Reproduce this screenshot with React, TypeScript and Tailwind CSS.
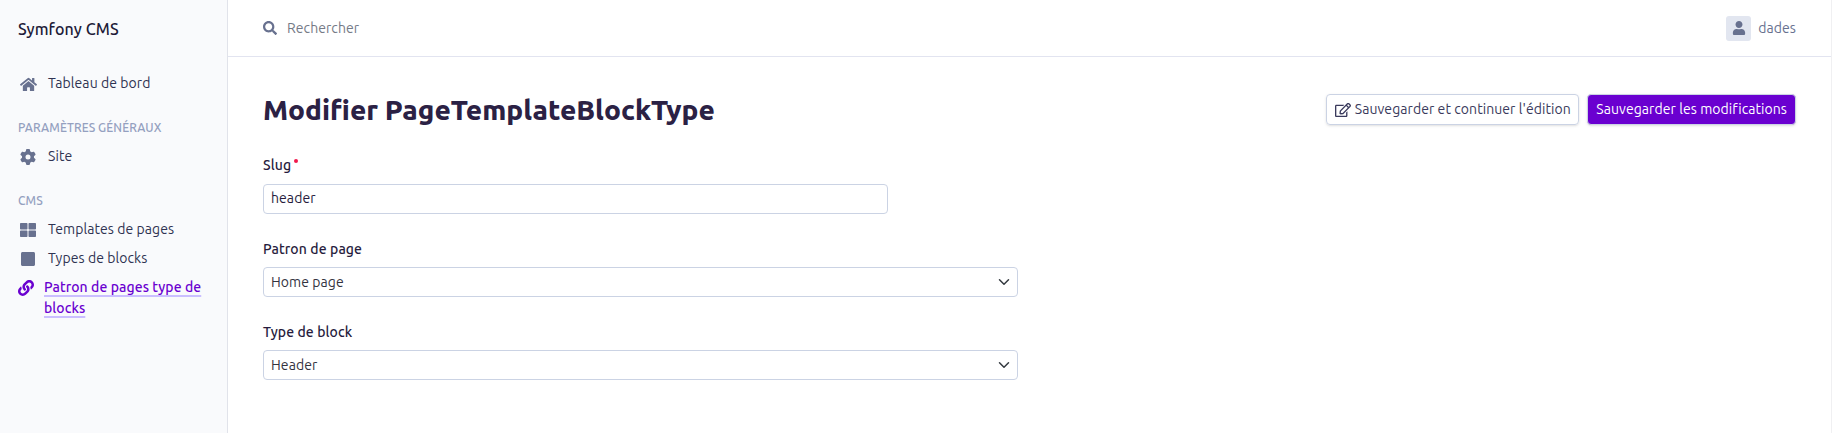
import type { ReactNode } from "react";
import {
  FaHome,
  FaLink,
  FaRegEdit,
  FaSearch,
  FaSquare,
  FaThLarge,
  FaUser,
} from "react-icons/fa";
import { FaGear } from "react-icons/fa6";

function MenuItem({ icon, children }: { icon: ReactNode; children: ReactNode }) {
  return (
    <a className="flex h-[29px] items-center text-[#2f3352]">
      <span className="mr-[10px] flex w-5 justify-center pt-px text-[#68718f]">{icon}</span>
      <span>{children}</span>
    </a>
  );
}

function MenuHeader({ children }: { children: ReactNode }) {
  return (
    <h2 className="h-[29px] text-[12px] leading-[29px] font-[540] tracking-[0.09px] text-[#94a0c0]">
      {children}
    </h2>
  );
}

function SelectField({ label, value }: { label: string; value: string }) {
  return (
    <div className="h-[83px]">
      <label className="block h-[37px] leading-[38px] font-[560] tracking-[0.1px] text-[#271c3d]">
        {label}
      </label>
      <div className="flex h-[30px] w-[755px] items-center justify-between rounded-[4px] border border-[#cbd3e4] px-[7px] text-[#34333f]">
        <span>{value}</span>
        <svg
          className="size-[12px]"
          viewBox="0 0 16 16"
          fill="none"
          stroke="#343a40"
          strokeWidth="2"
          strokeLinecap="round"
          strokeLinejoin="round"
        >
          <path d="m2 5 6 6 6-6" />
        </svg>
      </div>
    </div>
  );
}

export default function App() {
  return (
    <div className="flex h-[433px] w-full bg-white font-[Ubuntu,'Noto_Sans',sans-serif] text-[14px] leading-[21px] tracking-[0.07px]">
      <aside className="w-[228px] shrink-0 border-r border-[#e1e3ea] bg-[#f9fafc] pl-[18px]">
        <div className="pt-[17px] text-[16px] leading-6 font-[560] tracking-[0.1px] text-[#211a38]">
          Symfony CMS
        </div>
        <nav className="pt-[28px]">
          <MenuItem icon={<FaHome className="size-[17px]" />}>Tableau de bord</MenuItem>
          <div className="pt-[15px]">
            <MenuHeader>PARAMÈTRES GÉNÉRAUX</MenuHeader>
          </div>
          <MenuItem icon={<FaGear className="size-[16px]" />}>Site</MenuItem>
          <div className="pt-[15px]">
            <MenuHeader>CMS</MenuHeader>
          </div>
          <MenuItem icon={<FaThLarge className="size-[16px]" />}>Templates de pages</MenuItem>
          <MenuItem icon={<FaSquare className="size-[16px]" />}>Types de blocks</MenuItem>
          <a className="flex pt-1 font-[560] text-[#6a00d0]">
            <FaLink className="mt-[3px] mr-[10px] size-4 shrink-0" />
            <span className="w-[165px] underline decoration-[#cabfff] decoration-2 underline-offset-[3px]">
              Patron de pages type de blocks
            </span>
          </a>
        </nav>
      </aside>
      <main className="min-w-0 grow border-r border-[#f0f0f2]">
        <header className="flex h-[57px] items-center justify-between border-b border-[#e2e4f0] px-[35px]">
          <div className="flex items-center">
            <FaSearch className="size-[14px] text-[#68718f]" />
            <span className="ml-[10px] text-[#757a86]">Rechercher</span>
          </div>
          <div className="flex items-center text-[#68718f]">
            <span className="mr-[7px] flex size-[25px] items-center justify-center rounded-[3px] bg-[#e2e6f0]">
              <FaUser className="size-[14px]" />
            </span>
            <span>dades</span>
          </div>
        </header>
        <div className="flex items-start justify-between px-[35px]">
          <h1 className="pt-[35px] text-[28px] leading-[36px] font-extrabold tracking-normal text-[#2b2144]">
            Modifier PageTemplateBlockType
          </h1>
          <div className="flex gap-2 pt-[37px]">
            <button className="flex h-[31px] items-center gap-1 rounded-[4px] border border-[#cbd3e4] px-[7.5px] text-[#3a3a5c] shadow-sm">
              <FaRegEdit className="size-[16px]" />
              <span>Sauvegarder et continuer l'édition</span>
            </button>
            <button className="h-[31px] rounded-[4px] border border-[#cbd3e4] bg-[#6a00d0] px-2 text-white shadow-sm">
              Sauvegarder les modifications
            </button>
          </div>
        </div>
        <form className="pt-[19px] pl-[35px]">
          <div className="h-[83px]">
            <label className="flex h-[37px] leading-[36px] font-[560] tracking-[0.1px] text-[#271c3d]">
              Slug
              <span className="mt-[12px] ml-[3px] size-1 rounded-full bg-[#f0194c]" />
            </label>
            <div className="h-[30px] w-[625px] rounded-[4px] border border-[#cbd3e4] pl-[7px] leading-[27px] text-[#271c3d]">
              header
            </div>
          </div>
          <SelectField label="Patron de page" value="Home page" />
          <SelectField label="Type de block" value="Header" />
        </form>
      </main>
    </div>
  );
}
